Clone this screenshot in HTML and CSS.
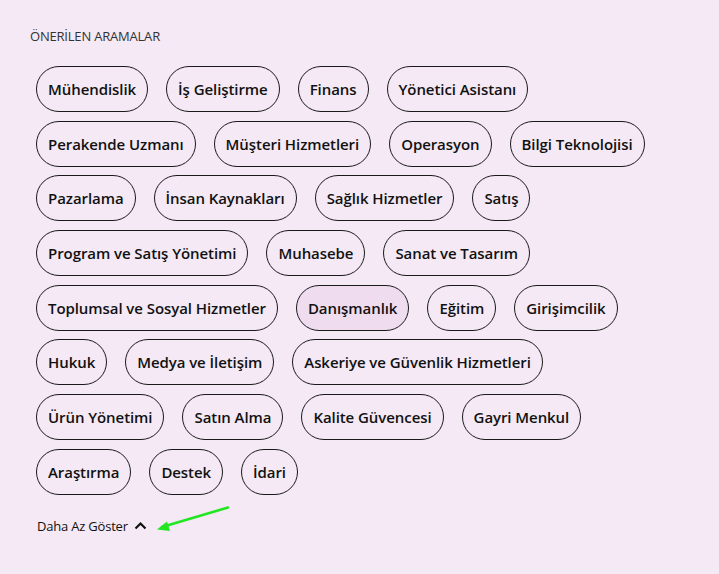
FILE: index.html
```html
<!DOCTYPE html>
<html lang="tr">
<head>
<meta charset="utf-8">
<link rel="stylesheet" href="styles.css">
</head>
<body>
<section class="suggest">
  <h2 class="title">ÖNERİLEN ARAMALAR</h2>
  <div class="chips">
    <button class="chip">Mühendislik</button>
    <button class="chip">İş Geliştirme</button>
    <button class="chip">Finans</button>
    <button class="chip">Yönetici Asistanı</button>
    <button class="chip">Perakende Uzmanı</button>
    <button class="chip">Müşteri Hizmetleri</button>
    <button class="chip">Operasyon</button>
    <button class="chip">Bilgi Teknolojisi</button>
    <button class="chip">Pazarlama</button>
    <button class="chip">İnsan Kaynakları</button>
    <button class="chip">Sağlık Hizmetler</button>
    <button class="chip">Satış</button>
    <button class="chip">Program ve Satış Yönetimi</button>
    <button class="chip">Muhasebe</button>
    <button class="chip">Sanat ve Tasarım</button>
    <button class="chip">Toplumsal ve Sosyal Hizmetler</button>
    <button class="chip chip-active">Danışmanlık</button>
    <button class="chip">Eğitim</button>
    <button class="chip">Girişimcilik</button>
    <button class="chip">Hukuk</button>
    <button class="chip">Medya ve İletişim</button>
    <button class="chip">Askeriye ve Güvenlik Hizmetleri</button>
    <button class="chip">Ürün Yönetimi</button>
    <button class="chip">Satın Alma</button>
    <button class="chip">Kalite Güvencesi</button>
    <button class="chip">Gayri Menkul</button>
    <button class="chip">Araştırma</button>
    <button class="chip">Destek</button>
    <button class="chip">İdari</button>
  </div>
  <button class="less">Daha Az Göster
    <svg class="chev" width="13" height="9" viewBox="0 0 13 9"><path d="M1.5 7.5 L6.5 2.5 L11.5 7.5" fill="none" stroke="#111" stroke-width="2.2"/></svg>
  </button>
</section>
<svg class="arrow" width="80" height="30" viewBox="0 0 80 30">
  <line x1="76" y1="1.5" x2="10" y2="21" stroke="#22e622" stroke-width="2.6" stroke-linecap="round"/>
  <path d="M5 23.5 L15 15.5 L18 25 Z" fill="#22e622"/>
</svg>
</body>
</html>
```
FILE: styles.css
```css
html, body {
  margin: 0;
  padding: 0;
  background: #f4e9f4;
}
body {
  width: 719px;
  height: 574px;
  overflow: hidden;
  position: relative;
  font-family: "Open Sans", "Noto Sans", sans-serif;
  color: #111;
}
.suggest {
  padding: 28px 0 0 30px;
}
.title {
  margin: 0;
  font-size: 13px;
  font-weight: 400;
  color: #333;
  line-height: 16px;
  letter-spacing: -0.2px;
}
.chips {
  display: flex;
  flex-wrap: wrap;
  column-gap: 18px;
  row-gap: 8.7px;
  margin: 22px 0 0 6px;
  width: 640px;
}
.chip {
  box-sizing: border-box;
  height: 46px;
  padding: 0 11px;
  border: 1px solid #1a1a1a;
  border-radius: 23px;
  background: transparent;
  font-family: inherit;
  font-size: 15px;
  font-weight: 600;
  color: #111;
  letter-spacing: -0.07px;
  white-space: nowrap;
}
.chip-active {
  background: #f0dcef;
}
.less {
  display: flex;
  align-items: center;
  gap: 6px;
  margin: 22px 0 0 7px;
  padding: 0;
  border: 0;
  background: transparent;
  font-family: inherit;
  font-size: 13px;
  color: #111;
  letter-spacing: -0.2px;
}
.chev {
  display: block;
}
.arrow {
  position: absolute;
  left: 152px;
  top: 506px;
}
```
